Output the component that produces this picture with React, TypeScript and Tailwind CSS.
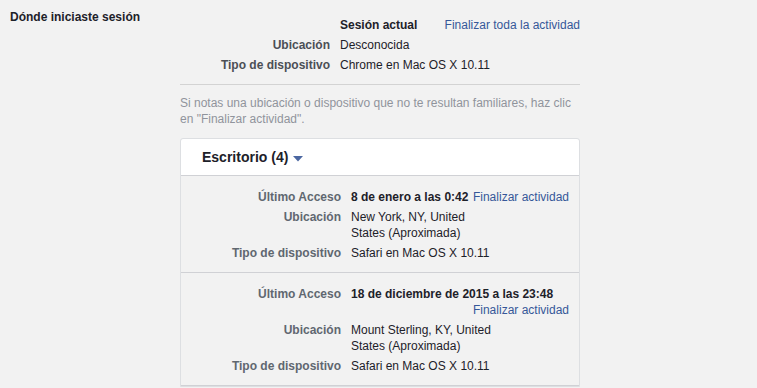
import React from 'react';

type Session = {
  when: string;
  place: string;
  device: string;
};

const sessions: Session[] = [
  { when: '8 de enero a las 0:42', place: 'New York, NY, United States (Aproximada)', device: 'Safari en Mac OS X 10.11' },
  { when: '18 de diciembre de 2015 a las 23:48', place: 'Mount Sterling, KY, United States (Aproximada)', device: 'Safari en Mac OS X 10.11' },
];

const Row = ({ label, labelClass, children }: { label: string; labelClass: string; children: React.ReactNode }) => (
  <div className="flex gap-[10px]">
    <div className={`w-[150px] shrink-0 text-right font-bold ${labelClass}`}>{label}</div>
    <div className="flex-1 min-w-0">{children}</div>
  </div>
);

export default function App() {
  return (
    <div
      className="w-[757px] h-[388px] overflow-hidden bg-[#f2f2f2] text-[12px] leading-[16px] text-[#1d2129] flex"
      style={{ fontFamily: '"Liberation Sans", Helvetica, Arial, sans-serif' }}
    >
      {/* left heading */}
      <div className="w-[180px] shrink-0 pl-[10px] pt-[9px] font-bold">Dónde iniciaste sesión</div>

      <div className="w-[400px] shrink-0 pt-[17px]">
        {/* current session */}
        <div className="flex flex-col gap-[4px] pb-[11px] border-b border-[#d3d3d3]">
          <Row label="" labelClass="">
            <div className="flex justify-between">
              <span className="font-bold">Sesión actual</span>
              <a className="text-[#365899]">Finalizar toda la actividad</a>
            </div>
          </Row>
          <Row label="Ubicación" labelClass="text-[#4b4f56]">Desconocida</Row>
          <Row label="Tipo de dispositivo" labelClass="text-[#4b4f56]">Chrome en Mac OS X 10.11</Row>
        </div>

        <p className="mt-[10px] text-[#90949c]">
          Si notas una ubicación o dispositivo que no te resultan familiares, haz clic en "Finalizar actividad".
        </p>

        {/* desktop sessions */}
        <div className="mt-[11px] border border-[#dddfe2] rounded-t-[3px]">
          <div className="h-[37px] bg-white border-b border-[#d0d1d5] flex items-center pl-[21px] rounded-t-[3px]">
            <span className="text-[14px] font-bold text-[#1d2129]">Escritorio (4)</span>
            <svg width="10" height="6" viewBox="0 0 10 6" className="ml-[5px] mt-[3px]">
              <path d="M0 0 H10 L5 5.5 Z" fill="#4b67a1" />
            </svg>
          </div>

          {sessions.map((s, i) => (
            <div key={i} className="px-[10px] pt-[13px] pb-[11px] border-b border-[#d0d1d5] flex flex-col gap-[4px]">
              <Row label="Último Acceso" labelClass="text-[#606770]">
                <div className="flex flex-wrap">
                  <span className="font-bold mr-[4px]">{s.when}</span>
                  <a className="ml-auto text-[#365899]">Finalizar actividad</a>
                </div>
              </Row>
              <Row label="Ubicación" labelClass="text-[#606770]">
                <div className="max-w-[150px]">{s.place}</div>
              </Row>
              <Row label="Tipo de dispositivo" labelClass="text-[#606770]">{s.device}</Row>
            </div>
          ))}
        </div>
      </div>
    </div>
  );
}
